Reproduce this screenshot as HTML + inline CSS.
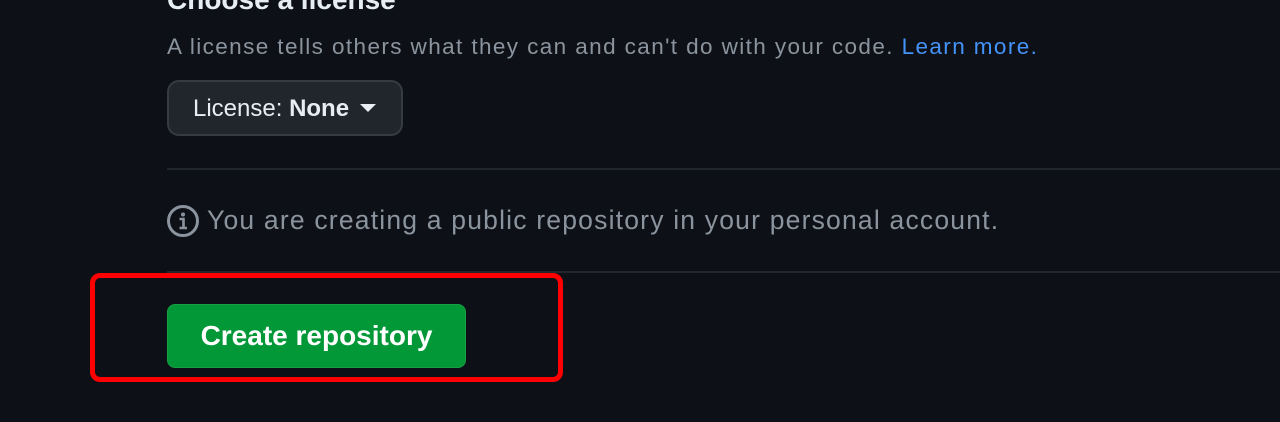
<!DOCTYPE html>
<html><head><style>
body{margin:0;width:1280px;height:422px;background:#0d1117;font-family:"Liberation Sans",sans-serif;position:relative;overflow:hidden}
.a{position:absolute;white-space:nowrap}
</style></head><body>
<div class="a" style="left:167px;top:-16px;font-size:28px;font-weight:bold;color:#e6edf3">Choose a license</div>
<div class="a" style="left:167px;top:34px;font-size:22.5px;color:#8b949e;letter-spacing:1.4px">A license tells others what they can and can't do with your code. <span style="color:#4493f8">Learn more.</span></div>
<div class="a" style="left:167px;top:80px;width:232px;height:52px;background:#21262d;border:2px solid #363b42;border-radius:12px;box-sizing:content-box"></div>
<div class="a" style="left:193px;top:95px;font-size:24px;color:#e6edf3">License: <b>None</b></div>
<svg class="a" style="left:360px;top:104px" width="16" height="9"><path d="M0 0H16L8 8Z" fill="#e6edf3"/></svg>
<div class="a" style="left:167px;top:168px;width:1113px;height:2px;background:#21262d"></div>
<svg class="a" style="left:166px;top:204px" width="34" height="34" viewBox="0 0 34 34"><circle cx="17" cy="17" r="14.5" fill="none" stroke="#8b949e" stroke-width="3"/><circle cx="17" cy="10.5" r="2" fill="#8b949e"/><path d="M13.5 15H17.5V23M13.5 24H21" stroke="#8b949e" stroke-width="2.6" fill="none"/></svg>
<div class="a" style="left:207px;top:205px;font-size:26.5px;color:#8b949e;letter-spacing:1.2px">You are creating a public repository in your personal account.</div>
<div class="a" style="left:167px;top:271px;width:1113px;height:2px;background:#21262d"></div>
<div class="a" style="left:167px;top:304px;width:299px;height:64px;background:#029837;border-radius:8px;border:1px solid #14a043;box-sizing:border-box"></div>
<div class="a" style="left:167px;top:320px;width:299px;text-align:center;font-size:28px;font-weight:bold;color:#fff">Create repository</div>
<div class="a" style="left:90px;top:273px;width:473px;height:109px;border:5px solid #ff0000;border-radius:10px;box-sizing:border-box"></div>
</body></html>
